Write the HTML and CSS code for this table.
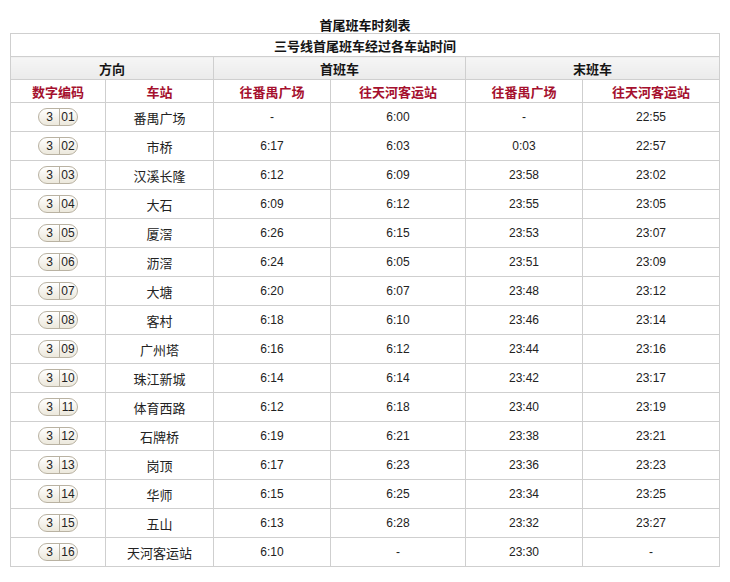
FILE: index.html
```html
<!DOCTYPE html>
<html lang="zh-CN">
<head>
<meta charset="utf-8">
<title>首尾班车时刻表</title>
<link rel="stylesheet" href="styles.css">
</head>
<body>
<div class="page">
  <div class="title">首尾班车时刻表</div>
  <table class="tt">
    <colgroup>
      <col class="c1"><col class="c2"><col class="c3"><col class="c4"><col class="c5"><col class="c6">
    </colgroup>
    <thead>
      <tr class="sub"><th colspan="6">三号线首尾班车经过各车站时间</th></tr>
      <tr class="grp"><th colspan="2">方向</th><th colspan="2">首班车</th><th colspan="2">末班车</th></tr>
      <tr class="hd"><th>数字编码</th><th>车站</th><th>往番禺广场</th><th>往天河客运站</th><th>往番禺广场</th><th>往天河客运站</th></tr>
    </thead>
    <tbody>
      <tr><td><span class="pill"><span class="l">3</span><span class="r">01</span></span></td><td class="st">番禺广场</td><td>-</td><td>6:00</td><td>-</td><td>22:55</td></tr>
      <tr><td><span class="pill"><span class="l">3</span><span class="r">02</span></span></td><td class="st">市桥</td><td>6:17</td><td>6:03</td><td>0:03</td><td>22:57</td></tr>
      <tr><td><span class="pill"><span class="l">3</span><span class="r">03</span></span></td><td class="st">汉溪长隆</td><td>6:12</td><td>6:09</td><td>23:58</td><td>23:02</td></tr>
      <tr><td><span class="pill"><span class="l">3</span><span class="r">04</span></span></td><td class="st">大石</td><td>6:09</td><td>6:12</td><td>23:55</td><td>23:05</td></tr>
      <tr><td><span class="pill"><span class="l">3</span><span class="r">05</span></span></td><td class="st">厦滘</td><td>6:26</td><td>6:15</td><td>23:53</td><td>23:07</td></tr>
      <tr><td><span class="pill"><span class="l">3</span><span class="r">06</span></span></td><td class="st">沥滘</td><td>6:24</td><td>6:05</td><td>23:51</td><td>23:09</td></tr>
      <tr><td><span class="pill"><span class="l">3</span><span class="r">07</span></span></td><td class="st">大塘</td><td>6:20</td><td>6:07</td><td>23:48</td><td>23:12</td></tr>
      <tr><td><span class="pill"><span class="l">3</span><span class="r">08</span></span></td><td class="st">客村</td><td>6:18</td><td>6:10</td><td>23:46</td><td>23:14</td></tr>
      <tr><td><span class="pill"><span class="l">3</span><span class="r">09</span></span></td><td class="st">广州塔</td><td>6:16</td><td>6:12</td><td>23:44</td><td>23:16</td></tr>
      <tr><td><span class="pill"><span class="l">3</span><span class="r">10</span></span></td><td class="st">珠江新城</td><td>6:14</td><td>6:14</td><td>23:42</td><td>23:17</td></tr>
      <tr><td><span class="pill"><span class="l">3</span><span class="r">11</span></span></td><td class="st">体育西路</td><td>6:12</td><td>6:18</td><td>23:40</td><td>23:19</td></tr>
      <tr><td><span class="pill"><span class="l">3</span><span class="r">12</span></span></td><td class="st">石牌桥</td><td>6:19</td><td>6:21</td><td>23:38</td><td>23:21</td></tr>
      <tr><td><span class="pill"><span class="l">3</span><span class="r">13</span></span></td><td class="st">岗顶</td><td>6:17</td><td>6:23</td><td>23:36</td><td>23:23</td></tr>
      <tr><td><span class="pill"><span class="l">3</span><span class="r">14</span></span></td><td class="st">华师</td><td>6:15</td><td>6:25</td><td>23:34</td><td>23:25</td></tr>
      <tr><td><span class="pill"><span class="l">3</span><span class="r">15</span></span></td><td class="st">五山</td><td>6:13</td><td>6:28</td><td>23:32</td><td>23:27</td></tr>
      <tr><td><span class="pill"><span class="l">3</span><span class="r">16</span></span></td><td class="st">天河客运站</td><td>6:10</td><td>-</td><td>23:30</td><td>-</td></tr>
    </tbody>
  </table>
</div>
</body>
</html>
```
FILE: styles.css
```css
html, body {
  margin: 0;
  padding: 0;
  background: #ffffff;
}
body {
  font-family: "Liberation Sans", "Noto Sans CJK SC", sans-serif;
  color: #1e1e1e;
}
.page {
  width: 730px;
  height: 582px;
  padding: 0 10px 0 10px;
  box-sizing: border-box;
}
.title {
  height: 33px;
  box-sizing: border-box;
  padding-top: 17px;
  text-align: center;
  font-family: "Noto Sans CJK SC", sans-serif;
  font-weight: 700;
  font-size: 13px;
  line-height: 16px;
  color: #111;
}
.tt {
  width: 709px;
  border-collapse: collapse;
  table-layout: fixed;
}
.c1 { width: 95px; }
.c2 { width: 108px; }
.c3 { width: 117px; }
.c4 { width: 135px; }
.c5 { width: 117px; }
.c6 { width: 137px; }
.tt th, .tt td {
  border: 1px solid #cfcfcf;
  padding: 0;
  text-align: center;
  vertical-align: middle;
}
.tt th {
  font-family: "Noto Sans CJK SC", sans-serif;
  font-weight: 700;
  font-size: 13px;
}
.sub th {
  height: 22px;
  color: #151515;
  background: #ffffff;
}
.grp th {
  height: 22px;
  color: #151515;
  background: linear-gradient(#f6f6f6, #ebebeb);
}
.hd th {
  height: 22px;
  color: #a5102e;
  background: #ffffff;
}
.tt td {
  height: 28px;
  font-size: 12px;
  color: #222;
}
.tt td.st {
  font-family: "Noto Sans CJK SC", sans-serif;
  font-size: 13px;
}
.pill {
  display: inline-flex;
  width: 40px;
  height: 18px;
  box-sizing: border-box;
  border: 1px solid #b9b2a2;
  border-radius: 9px;
  background: linear-gradient(#ffffff, #ece8dc);
  vertical-align: middle;
  overflow: hidden;
  font-size: 12px;
  line-height: 16px;
  color: #222;
}
.pill .l {
  width: 19px;
  text-align: center;
  border-right: 1px solid #b9b2a2;
  padding-left: 1px;
}
.pill .r {
  flex: 1;
  text-align: center;
  padding-right: 1px;
}
```
